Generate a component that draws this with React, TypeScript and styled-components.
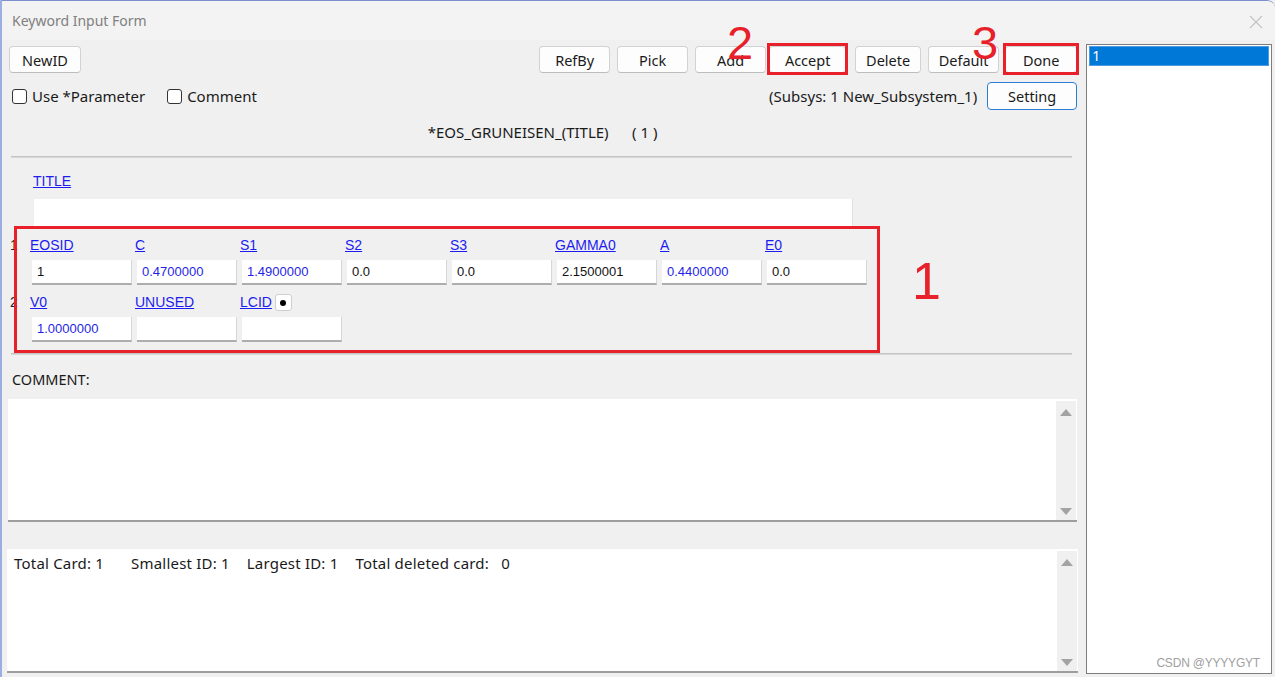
import styled, { createGlobalStyle } from "styled-components";

const GlobalStyle = createGlobalStyle`
  html, body {
    margin: 0;
    padding: 0;
    background: #f0f0f0;
  }
  body {
    font-family: "Noto Sans", "Open Sans", sans-serif;
    color: #1a1a1a;
  }
`;

const Window = styled.div`
  position: relative;
  width: 1275px;
  height: 677px;
  box-sizing: border-box;
  border-top: 1px solid #7b8fd0;
  border-left: 2px solid #9aaee2;
  border-top-right-radius: 8px;
  background: #f0f0f0;
  display: flex;
  flex-direction: column;
  overflow: hidden;
`;

const TitleBar = styled.div`
  height: 39px;
  flex: none;
  display: flex;
  align-items: center;
  justify-content: space-between;
  padding: 0 12px 0 10px;
  background: #f3f3f3;
  font-size: 14px;
  color: #808080;
`;

const CloseIcon = styled.svg`
  width: 14px;
  height: 14px;
  margin-top: 2px;
`;

const Body = styled.div`
  flex: 1;
  display: flex;
  gap: 9px;
  padding: 4px 3px 3px 6px;
  min-height: 0;
`;

const Main = styled.div`
  width: 1070px;
  display: flex;
  flex-direction: column;
`;

const Toolbar = styled.div`
  margin-top: 2px;
  display: flex;
  align-items: center;
  height: 27px;
`;

const ButtonGroup = styled.div`
  margin-left: auto;
  display: flex;
  gap: 7px;
`;

const Button = styled.button<{ $w?: number; $focus?: boolean; $marked?: boolean }>`
  position: relative;
  width: ${(p) => p.$w ?? 71}px;
  height: 27px;
  box-sizing: border-box;
  background: #fdfdfd;
  border: 1px solid ${(p) => (p.$focus ? "#2a7fd4" : "#d2d2d2")};
  border-bottom-color: ${(p) => (p.$focus ? "#2a7fd4" : "#bdbdbd")};
  border-radius: 4px;
  font-family: "Noto Sans", "Open Sans", sans-serif;
  font-size: 14.5px;
  color: #1a1a1a;
  padding: 0;

  ${(p) =>
    p.$marked &&
    `
    &::after {
      content: "";
      position: absolute;
      top: -4px;
      left: -3px;
      right: -3px;
      bottom: -3px;
      border: 3px solid #e8202a;
    }
  `}
`;

const OptionsRow = styled.div`
  margin-top: 9px;
  height: 28px;
  display: flex;
  align-items: center;
  font-size: 15px;
`;

const CheckLabel = styled.label`
  display: flex;
  align-items: center;
  gap: 5px;
  margin-left: 4px;
  margin-right: 18px;
`;

const CheckBox = styled.span`
  width: 13px;
  height: 13px;
  border: 1px solid #333;
  border-radius: 3px;
  background: #fff;
`;

const Subsys = styled.span`
  margin-left: auto;
  margin-right: 10px;
`;

const Heading = styled.div`
  margin-top: 12px;
  height: 20px;
  line-height: 20px;
  text-align: center;
  font-size: 15px;
  white-space: pre;
`;

const Separator = styled.div`
  margin: 14px 5px 0 3px;
  height: 0;
  border-top: 1px solid #c4c4c4;
  border-bottom: 1px solid #d8d8d8;
`;

const FieldLink = styled.a`
  font-family: "Liberation Sans", Arial, sans-serif;
  font-size: 14px;
  color: #1c1cf0;
  text-decoration: underline;
  line-height: 18px;
`;

const TitleBlock = styled.div`
  margin-top: 14px;
  padding-left: 25px;
  display: flex;
  flex-direction: column;
`;

const TitleInput = styled.div`
  margin-top: 9px;
  margin-left: 1px;
  width: 818px;
  height: 29px;
  background: #fff;
  border-right: 1px solid #e0e0e0;
`;

const CardArea = styled.div`
  position: relative;
  margin-top: 8px;
  display: grid;
  grid-template-columns: 22px repeat(8, 105px);
  row-gap: 8px;
`;

const RowNumber = styled.div`
  font-family: "Liberation Sans", Arial, sans-serif;
  font-size: 14px;
  line-height: 18px;
  padding-left: 2px;
  color: #222;
`;

const FieldCell = styled.div`
  display: flex;
  flex-direction: column;
`;

const LabelLine = styled.div`
  display: flex;
  align-items: center;
  gap: 3px;
  height: 18px;
`;

const DotButton = styled.span`
  width: 15px;
  height: 15px;
  margin-top: 1px;
  border: 1px solid #cfcfcf;
  border-radius: 3px;
  background: #fff;
  display: flex;
  align-items: center;
  justify-content: center;
  &::after {
    content: "";
    width: 6px;
    height: 6px;
    border-radius: 50%;
    background: #000;
  }
`;

const FieldInput = styled.div<{ $blue?: boolean }>`
  margin-top: 6px;
  margin-left: 2px;
  width: 100px;
  height: 25px;
  box-sizing: border-box;
  background: #fff;
  border-bottom: 2px solid #adadad;
  border-right: 1px solid #d6d6d6;
  padding-left: 5px;
  font-family: "Liberation Sans", Arial, sans-serif;
  font-size: 13px;
  line-height: 24px;
  color: ${(p) => (p.$blue ? "#1f1fe6" : "#111")};
`;

const MarkBox = styled.div<{ $top: number; $left: number; $w: number; $h: number }>`
  position: absolute;
  top: ${(p) => p.$top}px;
  left: ${(p) => p.$left}px;
  width: ${(p) => p.$w}px;
  height: ${(p) => p.$h}px;
  box-sizing: border-box;
  border: 3px solid #e8202a;
  pointer-events: none;
`;

const MarkNumber = styled.div<{ $top: number; $left: number; $size: number }>`
  position: absolute;
  top: ${(p) => p.$top}px;
  left: ${(p) => p.$left}px;
  font-family: "Liberation Sans", Arial, sans-serif;
  font-size: ${(p) => p.$size}px;
  line-height: 1;
  color: #e8202a;
  pointer-events: none;
`;

const CommentLabel = styled.div`
  margin-top: 14px;
  padding-left: 4px;
  font-size: 14.5px;
  line-height: 20px;
`;

const TextBox = styled.div<{ $top: number; $h: number }>`
  margin-top: ${(p) => p.$top}px;
  height: ${(p) => p.$h}px;
  box-sizing: border-box;
  background: #fff;
  border-bottom: 2px solid #9e9e9e;
  display: flex;
`;

const TextContent = styled.div`
  flex: 1;
  display: flex;
  align-items: flex-start;
  padding: 4px 7px;
  font-size: 15px;
  line-height: 20px;
  white-space: pre;
`;

const InfoItem = styled.span<{ $gap: number }>`
  margin-right: ${(p) => p.$gap}px;
  letter-spacing: 0.2px;
`;

const ScrollBar = styled.div`
  width: 20px;
  margin: 2px 1px 0 0;
  background: #f0f0f0;
  display: flex;
  flex-direction: column;
  justify-content: space-between;
  align-items: center;
  padding: 8px 0 5px;
`;

const Arrow = styled.span<{ $down?: boolean }>`
  width: 0;
  height: 0;
  border-left: 6px solid transparent;
  border-right: 6px solid transparent;
  ${(p) =>
    p.$down ? "border-top: 7px solid #a3a3a3;" : "border-bottom: 7px solid #a3a3a3;"}
`;

const ListPanel = styled.div`
  width: 186px;
  box-sizing: border-box;
  background: #fff;
  border: 1px solid #7d7d7d;
  padding: 1px 2px;
`;

const ListItem = styled.div<{ $selected?: boolean }>`
  height: 20px;
  box-sizing: border-box;
  line-height: 18px;
  padding-left: 2px;
  font-size: 14px;
  color: ${(p) => (p.$selected ? "#fff" : "#111")};
  background: ${(p) => (p.$selected ? "#0078d7" : "transparent")};
  border: 1px solid ${(p) => (p.$selected ? "#4c9be0" : "transparent")};
`;

const Watermark = styled.div`
  position: absolute;
  right: 15px;
  bottom: 7px;
  font-family: "Liberation Sans", Arial, sans-serif;
  font-size: 12px;
  letter-spacing: -0.2px;
  color: #a0a0a0;
`;

type Field = { name: string; value: string; blue?: boolean; dot?: boolean };

const card1: Field[] = [
  { name: "EOSID", value: "1" },
  { name: "C", value: "0.4700000", blue: true },
  { name: "S1", value: "1.4900000", blue: true },
  { name: "S2", value: "0.0" },
  { name: "S3", value: "0.0" },
  { name: "GAMMA0", value: "2.1500001" },
  { name: "A", value: "0.4400000", blue: true },
  { name: "E0", value: "0.0" },
];

const card2: Field[] = [
  { name: "V0", value: "1.0000000", blue: true },
  { name: "UNUSED", value: "" },
  { name: "LCID", value: "", dot: true },
];

const FieldRow = ({ num, fields }: { num: number; fields: Field[] }) => (
  <>
    <RowNumber>{num}</RowNumber>
    {fields.map((f) => (
      <FieldCell key={f.name}>
        <LabelLine>
          <FieldLink>{f.name}</FieldLink>
          {f.dot && <DotButton />}
        </LabelLine>
        <FieldInput $blue={f.blue}>{f.value}</FieldInput>
      </FieldCell>
    ))}
    {Array.from({ length: 8 - fields.length }).map((_, i) => (
      <div key={i} />
    ))}
  </>
);

export default function App() {
  return (
    <>
      <GlobalStyle />
      <Window>
        <TitleBar>
          <span>Keyword Input Form</span>
          <CloseIcon viewBox="0 0 14 14">
            <path d="M1 1 L13 13 M13 1 L1 13" stroke="#c4c4c4" strokeWidth="1.2" />
          </CloseIcon>
        </TitleBar>
        <Body>
          <Main>
            <Toolbar>
              <Button $w={72} style={{ marginLeft: 1 }}>NewID</Button>
              <ButtonGroup>
                <Button>RefBy</Button>
                <Button>Pick</Button>
                <Button style={{ marginRight: -4 }}>Add</Button>
                <Button $w={77} $marked>Accept</Button>
                <Button $w={66} style={{ marginLeft: 2 }}>Delete</Button>
                <Button>Default</Button>
                <Button $w={72} $marked style={{ marginLeft: -1 }}>Done</Button>
              </ButtonGroup>
            </Toolbar>
            <OptionsRow>
              <CheckLabel>
                <CheckBox />
                Use *Parameter
              </CheckLabel>
              <CheckLabel>
                <CheckBox />
                Comment
              </CheckLabel>
              <Subsys>(Subsys: 1 New_Subsystem_1)</Subsys>
              <Button $w={90} $focus style={{ height: 28 }}>Setting</Button>
            </OptionsRow>
            <Heading>{"*EOS_GRUNEISEN_(TITLE)      ( 1 )"}</Heading>
            <Separator />
            <TitleBlock>
              <LabelLine>
                <FieldLink>TITLE</FieldLink>
              </LabelLine>
              <TitleInput />
            </TitleBlock>
            <CardArea>
              <FieldRow num={1} fields={card1} />
              <FieldRow num={2} fields={card2} />
              <MarkBox $top={-10} $left={6} $w={866} $h={127} />
            </CardArea>
            <Separator style={{ marginTop: 11 }} />
            <CommentLabel>COMMENT:</CommentLabel>
            <TextBox $top={10} $h={123}>
              <TextContent />
              <ScrollBar>
                <Arrow />
                <Arrow $down />
              </ScrollBar>
            </TextBox>
            <TextBox $top={27} $h={124} style={{ marginLeft: -1, marginRight: -1 }}>
              <TextContent>
                <InfoItem $gap={27}>Total Card: 1</InfoItem>
                <InfoItem $gap={17}>Smallest ID: 1</InfoItem>
                <InfoItem $gap={17}>Largest ID: 1</InfoItem>
                <InfoItem $gap={0}>{"Total deleted card:   0"}</InfoItem>
              </TextContent>
              <ScrollBar>
                <Arrow />
                <Arrow $down />
              </ScrollBar>
            </TextBox>
          </Main>
          <ListPanel>
            <ListItem $selected>1</ListItem>
          </ListPanel>
        </Body>
        <MarkNumber $top={18} $left={725} $size={47}>2</MarkNumber>
        <MarkNumber $top={18} $left={970} $size={47}>3</MarkNumber>
        <MarkNumber $top={254} $left={910} $size={52}>1</MarkNumber>
        <Watermark>CSDN @YYYYGYT</Watermark>
      </Window>
    </>
  );
}
